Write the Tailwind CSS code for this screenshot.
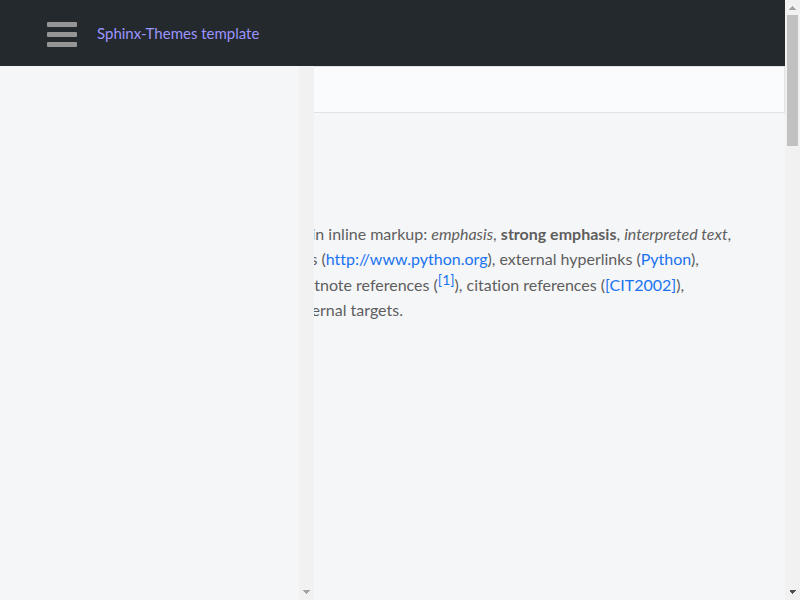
<!DOCTYPE html>
<html lang="en">
<head>
<meta charset="utf-8">
<title>Sphinx-Themes template</title>
<script src="https://cdn.jsdelivr.net/npm/@tailwindcss/browser@4"></script>
</head>
<body class="flex h-screen overflow-hidden bg-[#f5f6f8] font-['Lato',sans-serif] text-base text-[#5e5e5e] [font-variant-ligatures:none]">
<div class="flex min-w-0 flex-1 flex-col">
  <header class="flex h-[66px] shrink-0 items-center gap-5 bg-[#24292d] px-[47px]">
    <button type="button" aria-label="Toggle menu" class="mt-[3px] flex w-[30px] flex-col gap-[5px]">
      <span class="h-[5px] w-full rounded-[1px] bg-[#959595]"></span>
      <span class="h-[5px] w-full rounded-[1px] bg-[#959595]"></span>
      <span class="h-[5px] w-full rounded-[1px] bg-[#959595]"></span>
    </button>
    <a href="#" class="text-[15px] leading-5 text-[#9b95ff]">Sphinx-Themes template</a>
  </header>
  <div class="relative min-h-0 flex-1">
    <aside class="absolute inset-y-0 left-0 z-10 flex w-[314px] bg-[#f5f6f8]">
      <nav class="flex-1" aria-label="Contents"></nav>
      <div class="flex w-[15px] flex-col items-center justify-end bg-[#f1f1f1] pb-[6px]">
        <svg width="7" height="4" fill="#a3a3a3" shape-rendering="crispEdges"><path d="M0 0h7v1h-1v1h-1v1h-1v1h-1v-1h-1v-1h-1v-1h-1z"/></svg>
      </div>
    </aside>
    <div class="h-[47px] border border-[#e1e2e4] bg-[#fafbfd]"></div>
    <main class="overflow-hidden px-10 pt-[108px]">
      <p class="leading-[25px] whitespace-nowrap">Paragraphs contain text and may contain inline markup: <em>emphasis</em>, <strong>strong emphasis</strong>, <i>interpreted text</i>,<br>
      <code class="font-['Liberation_Mono',monospace] text-[13px] leading-4">inline literals</code>, standalone hyperlinks (<a href="#" class="text-[#1a73f0]">http://www.python.org</a>), external hyperlinks (<a href="#" class="text-[#1a73f0]">Python</a>),<br>
      internal cross-references (example), footnote references (<sup class="static align-super text-sm leading-[18px]"><a href="#" class="text-[#1a73f0]">[1]</a></sup>), citation references (<a href="#" class="text-[#1a73f0]">[CIT2002]</a>),<br>
      substitution references (), and inline internal targets.</p>
    </main>
  </div>
</div>
<div class="flex w-[15px] shrink-0 flex-col items-center bg-[#f1f1f1] pt-[6px] pb-[6px]" aria-hidden="true">
  <svg width="7" height="4" fill="#a3a3a3" shape-rendering="crispEdges"><path d="M3 0h1v1h1v1h1v1h1v1h-7v-1h1v-1h1v-1h1z"/></svg>
  <div class="mt-[5px] h-[131px] w-[11px] bg-[#c1c1c1]"></div>
  <svg class="mt-auto" width="7" height="4" fill="#505050" shape-rendering="crispEdges"><path d="M0 0h7v1h-1v1h-1v1h-1v1h-1v-1h-1v-1h-1v-1z"/></svg>
</div>
</body>
</html>
